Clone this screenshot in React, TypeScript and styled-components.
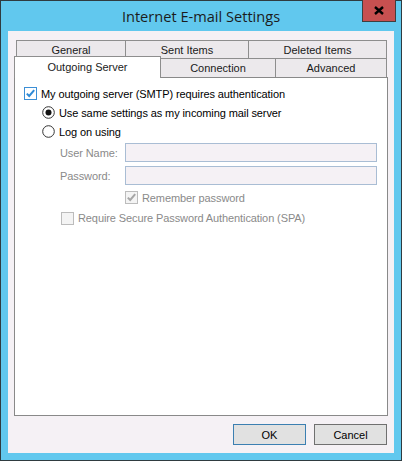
import React from 'react';
import styled, { createGlobalStyle } from 'styled-components';

const GlobalStyle = createGlobalStyle`
  html, body {
    margin: 0;
    padding: 0;
    background: #ffffff;
  }
  * {
    box-sizing: border-box;
  }
`;

const UI_FONT = `'Liberation Sans', Arial, sans-serif`;

const Window = styled.div`
  width: 402px;
  height: 461px;
  border: 1px solid #2f3b40;
  background: #61c8ee;
  display: flex;
  flex-direction: column;
  padding: 0 7px 7px 7px;
  font-family: ${UI_FONT};
  font-size: 11px;
  color: #000;
`;

const TitleBar = styled.div`
  height: 30px;
  display: grid;
  grid-template-columns: 1fr auto 1fr;
  align-items: start;
  margin: 0 -7px;
`;

const Title = styled.div`
  grid-column: 2;
  font-family: 'Open Sans', 'Noto Sans', sans-serif;
  font-size: 14.6px;
  line-height: 30px;
  color: #1c1c1c;
`;

const CloseBtn = styled.div`
  grid-column: 3;
  justify-self: end;
  margin: -1px 5px 0 0;
  width: 34px;
  height: 22px;
  background: #c75050;
  border: 1px solid #3f3f3f;
  border-top: none;
  display: flex;
  align-items: center;
  justify-content: center;
`;

const Client = styled.div`
  flex: 1;
  background: #f5f1f5;
  display: flex;
  flex-direction: column;
  padding: 9px 6px 8px 6px;
`;

const TabRow = styled.div<{ $h: number }>`
  display: flex;
  height: ${(p) => p.$h}px;
  padding: 0 2px;
`;

const Tab = styled.div<{ $w: number; $selected?: boolean }>`
  width: ${(p) => p.$w}px;
  flex: none;
  border: 1px solid #8e8e8e;
  border-bottom: none;
  background: #ece9ec;
  display: flex;
  align-items: center;
  justify-content: center;
  color: #1a1a1a;
  & + & {
    margin-left: -1px;
  }
  ${(p) =>
    p.$selected
      ? `
    background: #ffffff;
    margin: -2px 0 -1px -2px;
    height: 22px;
    position: relative;
    z-index: 1;
    padding-bottom: 2px;
  `
      : ''}
`;

const Panel = styled.div`
  flex: 1;
  background: #ffffff;
  border: 1px solid #898989;
  padding: 6px 9px;
  display: flex;
  flex-direction: column;
`;

const Row = styled.div<{ $indent?: number; $h?: number; $disabled?: boolean }>`
  display: flex;
  align-items: center;
  gap: 4px;
  height: ${(p) => p.$h ?? 19}px;
  padding-left: ${(p) => p.$indent ?? 0}px;
  color: ${(p) => (p.$disabled ? '#8a8a8a' : '#000')};
  white-space: nowrap;
  letter-spacing: -0.1px;
`;

const FieldLabel = styled.span`
  width: 61px;
  flex: none;
`;

const Input = styled.div`
  width: 252px;
  height: 19px;
  background: #f5f1f5;
  border: 1px solid #a9bdd4;
`;

const Footer = styled.div`
  display: flex;
  justify-content: flex-end;
  gap: 8px;
  margin-top: 8px;
  padding-right: 1px;
`;

const Button = styled.div<{ $default?: boolean }>`
  width: 73px;
  height: 21px;
  background: #e1e1e1;
  border: 1px solid ${(p) => (p.$default ? '#3c7fb1' : '#707070')};
  display: flex;
  align-items: center;
  justify-content: center;
  color: #000;
`;

const Check = ({ checked, disabled }: { checked?: boolean; disabled?: boolean }) => (
  <svg width="13" height="13" viewBox="0 0 13 13" style={{ flex: 'none' }}>
    <rect
      x="0.5"
      y="0.5"
      width="12"
      height="12"
      fill={disabled ? '#f4f4f4' : '#ffffff'}
      stroke={disabled ? '#bcbcbc' : '#3c8fd6'}
    />
    {checked && (
      <path
        d="M2.8 6.6 L5.2 9 L10.2 3.2"
        fill="none"
        stroke={disabled ? '#a6a6a6' : '#2f8ad6'}
        strokeWidth="2"
      />
    )}
  </svg>
);

const Radio = ({ checked }: { checked?: boolean }) => (
  <svg width="13" height="13" viewBox="0 0 13 13" style={{ flex: 'none' }}>
    <circle cx="6.5" cy="6.5" r="5.8" fill="#ffffff" stroke="#333333" />
    {checked && <circle cx="6.5" cy="6.5" r="3" fill="#111111" />}
  </svg>
);

export default function App() {
  return (
    <>
      <GlobalStyle />
      <Window>
        <TitleBar>
          <Title>Internet E-mail Settings</Title>
          <CloseBtn>
            <svg width="10" height="9" viewBox="0 0 10 9">
              <path d="M1 1 L9 8 M9 1 L1 8" stroke="#000" strokeWidth="2.4" />
            </svg>
          </CloseBtn>
        </TitleBar>
        <Client>
          <TabRow $h={18}>
            <Tab $w={110}>General</Tab>
            <Tab $w={124}>Sent Items</Tab>
            <Tab $w={139}>Deleted Items</Tab>
          </TabRow>
          <TabRow $h={19}>
            <Tab $w={147} $selected>
              Outgoing Server
            </Tab>
            <Tab $w={116}>Connection</Tab>
            <Tab $w={112}>Advanced</Tab>
          </TabRow>
          <Panel>
            <Row>
              <Check checked />
              <span>My outgoing server (SMTP) requires authentication</span>
            </Row>
            <Row $indent={18}>
              <Radio checked />
              <span>Use same settings as my incoming mail server</span>
            </Row>
            <Row $indent={18}>
              <Radio />
              <span>Log on using</span>
            </Row>
            <Row $indent={36} $h={23} $disabled>
              <FieldLabel>User Name:</FieldLabel>
              <Input />
            </Row>
            <Row $indent={36} $h={23} $disabled>
              <FieldLabel>Password:</FieldLabel>
              <Input />
            </Row>
            <Row $indent={101} $h={21} $disabled>
              <Check checked disabled />
              <span>Remember password</span>
            </Row>
            <Row $indent={37} $h={20} $disabled>
              <Check disabled />
              <span>Require Secure Password Authentication (SPA)</span>
            </Row>
          </Panel>
          <Footer>
            <Button $default>OK</Button>
            <Button>Cancel</Button>
          </Footer>
        </Client>
      </Window>
    </>
  );
}
